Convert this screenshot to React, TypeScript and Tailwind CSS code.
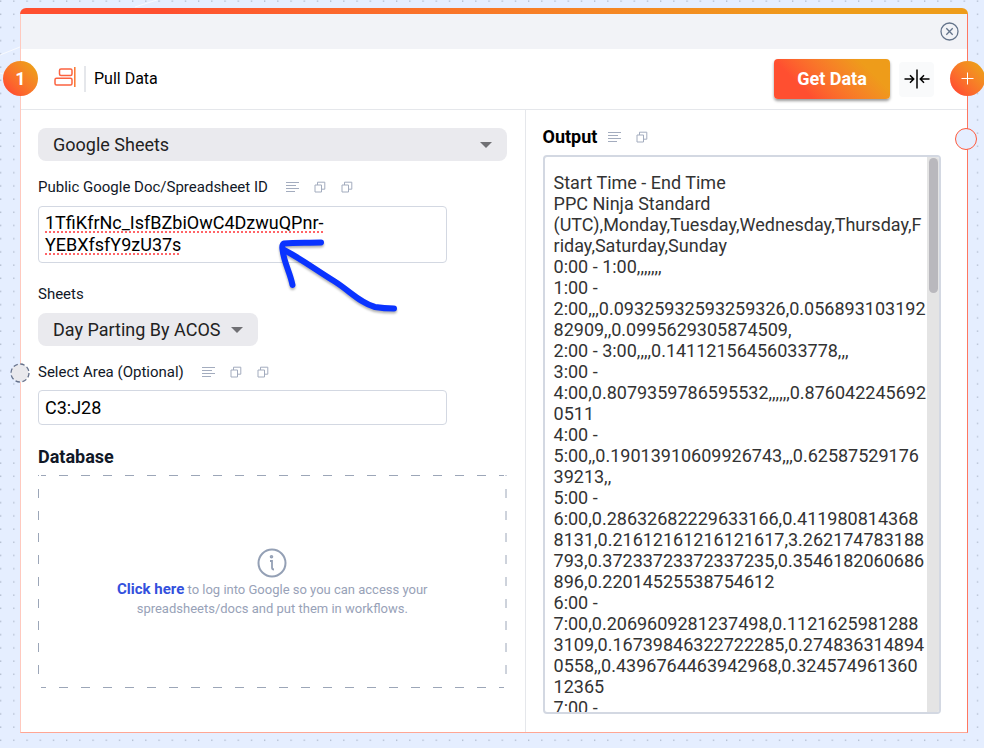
import { clsx } from "clsx";
import { useState } from "react";

const outputText = `Start Time - End Time
PPC Ninja Standard
(UTC),Monday,Tuesday,Wednesday,Thursday,F
riday,Saturday,Sunday
0:00 - 1:00,,,,,,,
1:00 -
2:00,,,0.09325932593259326,0.056893103192
82909,,0.0995629305874509,
2:00 - 3:00,,,,0.14112156456033778,,,
3:00 -
4:00,0.8079359786595532,,,,,,0.876042245692
0511
4:00 -
5:00,,0.19013910609926743,,,0.62587529176
39213,,
5:00 -
6:00,0.28632682229633166,0.411980814368
8131,0.21612161216121617,3.262174783188
793,0.37233723372337235,0.3546182060686
896,0.22014525538754612
6:00 -
7:00,0.2069609281237498,0.1121625981288
3109,0.16739846322722285,0.274836314894
0558,,0.4396764463942968,0.324574961360
12365
7:00 -`;

const LinesIcon = () => (
  <svg width="13" height="12" viewBox="0 0 13 12" fill="none" stroke="currentColor">
    <path d="M0 1.5h13M0 4.5h10M0 7.5h13M0 10.5h9" />
  </svg>
);

const CopyIcon = () => (
  <svg width="12" height="12" viewBox="0 0 12 12" fill="none" stroke="currentColor">
    <path d="M1 4h6.5v7H1zM3.5 4V1.2h7.300v7H7.500" />
  </svg>
);

const FieldActions = ({ copies }: { copies: number }) => (
  <div className="flex items-center gap-[15px] text-[#a3acbe]">
    <button type="button" aria-label="Format">
      <LinesIcon />
    </button>
    {Array.from({ length: copies }).map((_, i) => (
      <button key={i} type="button" aria-label="Copy">
        <CopyIcon />
      </button>
    ))}
  </div>
);

type DropdownProps = {
  id: string;
  label?: string;
  options: string[];
  className?: string;
};

const Dropdown = ({ id, label, options, className }: DropdownProps) => (
  <div className={clsx("relative", className)}>
    <select
      id={id}
      aria-label={label}
      className="h-[33px] w-full appearance-none rounded-lg bg-[#eaeaee] pr-9 pl-[15px] text-lg leading-6 text-[#222]"
    >
      {options.map((option) => (
        <option key={option}>{option}</option>
      ))}
    </select>
    <svg
      className="pointer-events-none absolute top-[14px] right-[15px]"
      width="12"
      height="6"
      viewBox="0 0 12 6"
    >
      <path d="M0 0h12L6 6z" fill="#707074" />
    </svg>
  </div>
);

const CanvasBackground = () => (
  <svg className="absolute inset-0 h-full w-full" aria-hidden="true">
    <defs>
      <pattern id="dots" width="13.2" height="13.2" patternUnits="userSpaceOnUse">
        <rect x="0" y="0.500" width="1.300" height="1.200" fill="#a9b3c6" />
      </pattern>
    </defs>
    <rect width="100%" height="100%" fill="#e5eeff" />
    <rect width="100%" height="100%" fill="url(#dots)" />
    <path d="M0 55L20 47M0 73l6 2M135 7l25-8" stroke="#f8fafe" fill="none" />
  </svg>
);

const Header = () => (
  <header className="relative flex h-[61px] items-center border-b border-gray-200 pr-[33px] pl-[33px]">
    <span className="absolute top-3 -left-[18px] flex size-[35px] items-center justify-center rounded-full bg-linear-to-tr from-[#ff4f30] from-15% to-[#ee9c1a] to-85% text-lg font-bold text-white">
      1
    </span>
    <svg
      className="-mt-1"
      width="22"
      height="22"
      viewBox="0 0 22 22"
      fill="none"
      stroke="#fb6340"
      strokeWidth="1.500"
    >
      <rect x="5.500" y="3" width="12.500" height="6.500" rx="1.500" />
      <rect x="1" y="12.300" width="17" height="6.700" rx="1.500" />
      <path d="M20.800 1v20" stroke="#f9762f" />
    </svg>
    <div className="mr-2 ml-2 h-[26px] w-[2px] bg-gray-200" />
    <h1 className="text-base text-black">Pull Data</h1>
    <button
      type="button"
      className="ml-auto h-10 w-[116px] rounded bg-linear-45 from-[#ff4f30] from-25% to-[#ee9c1a] to-80% text-lg font-bold text-white shadow-[0_2px_3px_rgba(0,0,0,0.4)]"
    >
      Get Data
    </button>
    <button
      type="button"
      aria-label="Collapse"
      className="ml-[9px] flex size-[35px] items-center justify-center rounded bg-gray-50"
    >
      <svg width="26" height="20" viewBox="0 0 26 20" fill="none" stroke="#000" strokeWidth="1.500">
        <path d="M13 0.500v19M0.500 10h9M6 6.300L9.700 10 6 13.700M25.500 10h-9M20 6.300L16.300 10l3.700 3.700" />
      </svg>
    </button>
    <button
      type="button"
      aria-label="Add step"
      className="absolute top-3 -right-[18px] flex size-[35px] items-center justify-center rounded-full bg-linear-to-tr from-[#ff4f30] from-15% to-[#ee9c1a] to-85%"
    >
      <svg width="13" height="13" viewBox="0 0 13 13" stroke="#fff">
        <path d="M6.500 0.500v12M0.500 6.500h12" />
      </svg>
    </button>
  </header>
);

const SourcePanel = () => {
  const [sheetId, setSheetId] = useState("1TfiKfrNc_IsfBZbiOwC4DzwuQPnr-YEBXfsfY9zU37s");
  const [area, setArea] = useState("C3:J28");

  return (
    <section className="relative border-r border-gray-200 pt-[18px] pr-[18px] pb-[43px] pl-[17px] text-[#111827]">
      <Dropdown id="source" label="Source" options={["Google Sheets"]} />

      <div className="mt-[14px] flex items-center gap-[18px]">
        <label htmlFor="sheet-id" className="text-[15px] leading-6">
          Public Google Doc/Spreadsheet ID
        </label>
        <FieldActions copies={2} />
      </div>
      <div className="relative mt-[7px] w-[409px]">
        <textarea
          id="sheet-id"
          spellCheck={false}
          value={sheetId}
          onChange={(e) => setSheetId(e.target.value)}
          className="block h-[57px] w-full resize-none overflow-hidden rounded border border-[#d3d8e2] py-[5px] pr-20 pl-[6px] text-lg leading-[22px] text-black underline decoration-red-400 decoration-dotted decoration-2 underline-offset-2 [text-decoration-skip-ink:none]"
        />
        {/* hand drawn arrow */}
        <svg
          className="pointer-events-none absolute top-[30px] left-[238px] drop-shadow-[0_2px_1px_rgba(0,0,0,0.3)]"
          width="126"
          height="80"
          viewBox="0 0 126 80"
          fill="none"
          stroke="#0a33ff"
          strokeWidth="6"
          strokeLinecap="round"
          strokeLinejoin="round"
        >
          <path d="M45 6.500C32 7 20 6 8 7.500c-2 1-2 3-1.500 6C8 27 14 36 16.500 49" />
          <path d="M8 14c16 8 32 20 50 31 16 10 26 22 41 26 6 1 12 1.500 19 1.500" />
        </svg>
      </div>

      <label htmlFor="sheets" className="mt-[19px] block text-[15px] leading-6">
        Sheets
      </label>
      <Dropdown
        id="sheets"
        options={["Day Parting By ACOS"]}
        className="mt-[7px] w-[220px]"
      />

      <div className="relative mt-[14px] flex items-center gap-[18px]">
        <svg className="absolute top-[3px] -left-7" width="20" height="20" viewBox="0 0 20 20">
          <circle
            cx="10"
            cy="10"
            r="9"
            fill="#e9e9ed"
            stroke="#64708a"
            strokeWidth="1.300"
            strokeDasharray="4.500 2.570"
          />
        </svg>
        <label htmlFor="area" className="text-[15px] leading-6">
          Select Area (Optional)
        </label>
        <FieldActions copies={2} />
      </div>
      <input
        id="area"
        type="text"
        value={area}
        onChange={(e) => setArea(e.target.value)}
        className="mt-[6px] block h-[35px] w-[409px] rounded border border-[#d3d8e2] px-[6px] text-lg text-black"
      />

      <h2 className="mt-5 text-lg leading-6 font-bold">Database</h2>
      <div className="relative mt-[6px] flex h-[213px] flex-col items-center pt-[73px]">
        <svg className="absolute inset-0 h-full w-full" fill="none" stroke="#9ca6b8">
          <path d="M3 .5h463M3 212.500h463" strokeDasharray="9 13" strokeDashoffset="4" />
          <path d="M.5 0v205M468 0v205" strokeDasharray="9 13" strokeDashoffset="-14" />
        </svg>
        <svg width="30" height="30" viewBox="0 0 30 30" fill="none" stroke="#94a0b5" strokeWidth="2">
          <circle cx="15" cy="15" r="13.500" />
          <path d="M13 13h2v6.500q0 2 2 2" strokeWidth="1.800" />
          <circle cx="14.500" cy="8.800" r="0.800" />
        </svg>
        <p className="relative mt-[2px] max-w-[330px] text-center text-[13px] leading-[19px] text-[#98a2b8]">
          <a href="#login" className="text-[15px] font-bold text-[#3350dd]">
            Click here
          </a>{" "}
          to log into Google so you can access your spreadsheets/docs and put them in workflows.
        </p>
      </div>
    </section>
  );
};

const OutputPanel = () => (
  <section className="relative flex flex-col pt-[15px] pr-[26px] pb-[18px] pl-[17px]">
    <span className="absolute top-[18px] -right-[10px] size-[22px] rounded-full border border-[#ff5a3c] bg-[#e5eeff]" />
    <div className="flex items-center gap-[11px]">
      <label htmlFor="output" className="text-lg leading-6 font-bold text-black">
        Output
      </label>
      <FieldActions copies={1} />
    </div>
    <div className="mt-[6px] flex flex-1 overflow-hidden rounded border-2 border-[#d3d8e2]">
      <textarea
        id="output"
        readOnly
        spellCheck={false}
        value={outputText}
        className="min-w-0 flex-1 resize-none overflow-hidden pt-[15px] pl-[9px] text-lg leading-[21px] whitespace-pre text-[#333]"
      />
      <div className="w-3 bg-[#e4e4e4] pt-px">
        <div className="mx-auto h-[135px] w-[9px] rounded-full bg-[#b9b8bd]" />
      </div>
    </div>
  </section>
);

export default function App() {
  return (
    <div className="relative flex min-h-screen flex-col overflow-hidden pt-2 pr-4 pb-[15px] pl-5 font-[Roboto,sans-serif]">
      <CanvasBackground />
      <main className="relative flex flex-1 flex-col rounded-t-lg bg-white">
        <div className="h-[6px] rounded-t-lg bg-linear-to-r from-[#ff4f30] from-15% to-[#ee9c1a] to-85%" />
        <div className="flex flex-1 flex-col border border-t-0 border-r-[#ff7760] border-b-[#ffa694] border-l-[#ffc9be]">
          <div className="flex h-[35px] items-center justify-end bg-[#f2f3f7] pr-2">
            <button type="button" aria-label="Close">
              <svg width="19" height="19" viewBox="0 0 19 19" fill="none" stroke="#64748b" strokeWidth="1.300">
                <circle cx="9.500" cy="9.500" r="8.500" />
                <path d="M6.300 6.300l6.400 6.400M12.700 6.300l-6.400 6.400" />
              </svg>
            </button>
          </div>
          <Header />
          <div className="grid flex-1 grid-cols-[8fr_7fr]">
            <SourcePanel />
            <OutputPanel />
          </div>
        </div>
      </main>
    </div>
  );
}
